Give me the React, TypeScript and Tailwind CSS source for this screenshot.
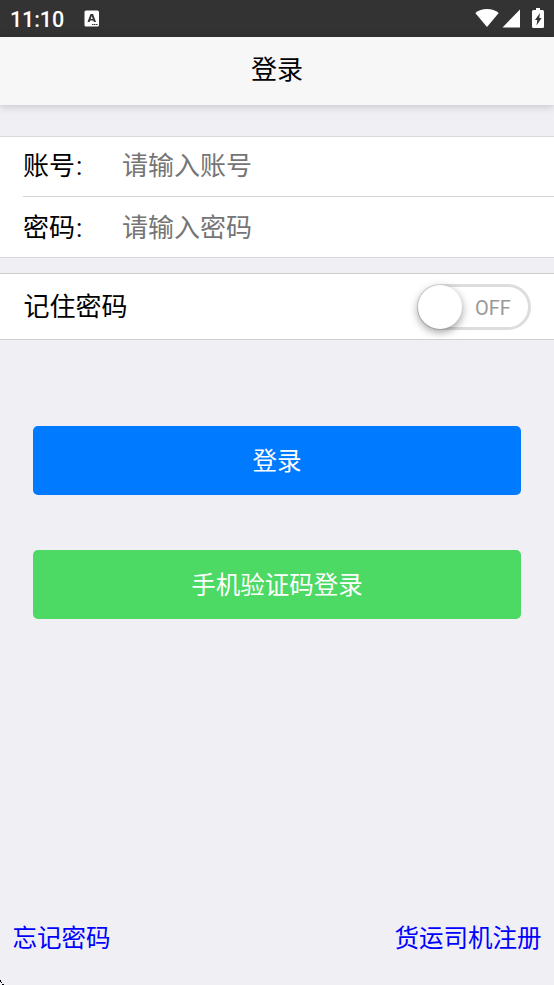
import { useState } from 'react';

const fields = [
  { id: 'account', label: '账号', placeholder: '请输入账号', type: 'text' },
  { id: 'password', label: '密码', placeholder: '请输入密码', type: 'password' },
];

const StatusBar = () => (
  <div className="flex h-[37px] shrink-0 items-center bg-[#333333] px-[10px] text-white">
    <span className="w-[54px] whitespace-nowrap text-[21.5px] font-medium leading-[37px] tracking-[-0.1px] pt-[1px]">11:10</span>
    <svg className="ml-[20px]" width="16" height="17" viewBox="0 0 16 17">
      <rect x="0.5" y="0.5" width="14.5" height="16" rx="1.5" fill="#fff" />
      <path d="M6.500 4H9L12 12H9.900L9.400 10.500H6.100L5.600 12H3.500ZM7.750 6 6.700 9H8.800Z" fill="#333" fillRule="evenodd" />
      <path d="M8 14.500H14" stroke="#333" strokeWidth="1" strokeDasharray="1.500 0.500" />
    </svg>
    <div className="-mt-px ml-auto flex items-center">
      <svg width="24" height="20" viewBox="0 0 24 20" fill="#fff">
        <path d="M12 19 .3 5C3.400 2.400 7.500.9 12 .9S20.600 2.400 23.700 5Z" />
      </svg>
      <svg className="ml-[3px]" width="18" height="20" viewBox="0 0 18 20" fill="#fff">
        <path d="M18 1.500V19.500H.5Z" />
      </svg>
      <svg className="ml-[12px]" width="12" height="20" viewBox="0 0 12 20">
        <path d="M4 0H8V2H10.500Q12 2 12 3.500V18.500Q12 20 10.500 20H1.500Q0 20 0 18.500V3.500Q0 2 1.500 2H4Z" fill="#fff" />
        <path d="M8 5 3 12H5.300L4.500 17.500 9.600 10H7.300Z" fill="#333" />
      </svg>
    </div>
  </div>
);

const App = () => {
  const [formData, setFormData] = useState({ account: '', password: '' });
  const [remember, setRemember] = useState(false);

  const handleChange = (e: React.ChangeEvent<HTMLInputElement>) => {
    const { name, value } = e.target;
    setFormData(prev => ({ ...prev, [name]: value }));
  };

  return (
    <div className="relative flex h-[985px] w-[554px] flex-col overflow-hidden bg-[#efeff4] font-[Roboto,'Noto_Sans_CJK_SC',sans-serif] text-[26px] text-black">
      <StatusBar />
      <header className="flex h-[68px] shrink-0 items-center justify-center bg-[#f7f7f7] shadow-[0_1px_9px_rgba(0,0,0,0.2)]">
        <h1 className="leading-[40px] pb-[2px]">登录</h1>
      </header>

      <form onSubmit={e => e.preventDefault()} className="flex flex-1 flex-col">
        <div className="mt-[31px] h-[122px] border-y border-[#d9d9db] bg-white pl-[23px]">
          {fields.map(field => (
            <div key={field.id} className="flex h-[60px] items-center border-b border-[#d5d5d7] pb-[2px] last:border-b-0 last:pb-0 last:pt-px">
              <label htmlFor={field.id} className="w-[99px] leading-[40px]">
                {field.label}<span className="ml-px">:</span>
              </label>
              <input
                id={field.id}
                name={field.id}
                type={field.type}
                value={formData[field.id as keyof typeof formData]}
                onChange={handleChange}
                placeholder={field.placeholder}
                className="h-[40px] min-w-0 flex-1 placeholder:text-[#757575] focus:outline-none"
              />
            </div>
          ))}
        </div>

        <div className="mt-[15px] flex h-[67px] items-center justify-between border-y border-[#cfcfd2] bg-white pl-[23.5px] pr-[23px]">
          <span className="leading-[40px]">记住密码</span>
          <button
            type="button"
            role="switch"
            aria-checked={remember}
            onClick={() => setRemember(!remember)}
            className="flex h-[46px] w-[114px] items-center rounded-full border-[3px] border-[#dddddd] bg-white"
          >
            <span className="-ml-[2px] mt-px size-[44px] shrink-0 rounded-full bg-white shadow-[0_3px_8px_rgba(0,0,0,0.4)]" />
            <span className="ml-[13px] mt-[2px] text-[20px] leading-[24px] text-[#999999]">{remember ? 'ON' : 'OFF'}</span>
          </button>
        </div>

        <div className="mx-[33px] mt-[86px] flex flex-col gap-[55px] text-[24.5px] text-white">
          <button type="submit" className="h-[69px] rounded-[5px] bg-[#007aff] pt-[3px]">登录</button>
          <button type="button" className="h-[69px] rounded-[5px] bg-[#4cd964] pt-[3px]">手机验证码登录</button>
        </div>

        <div className="mt-auto flex justify-between px-[12.5px] pb-[28px] text-[24.5px] leading-[37px] text-[#0000ff]">
          <a href="#forgot">忘记密码</a>
          <a href="#register">货运司机注册</a>
        </div>
      </form>

      <svg className="absolute bottom-0 left-0" width="5" height="5" viewBox="0 0 5 5" shapeRendering="crispEdges">
        <path d="M0 0h1v2H0zM1 2h1v1H1zM2 4h2v1H2z" />
      </svg>
    </div>
  );
};

export default App;
